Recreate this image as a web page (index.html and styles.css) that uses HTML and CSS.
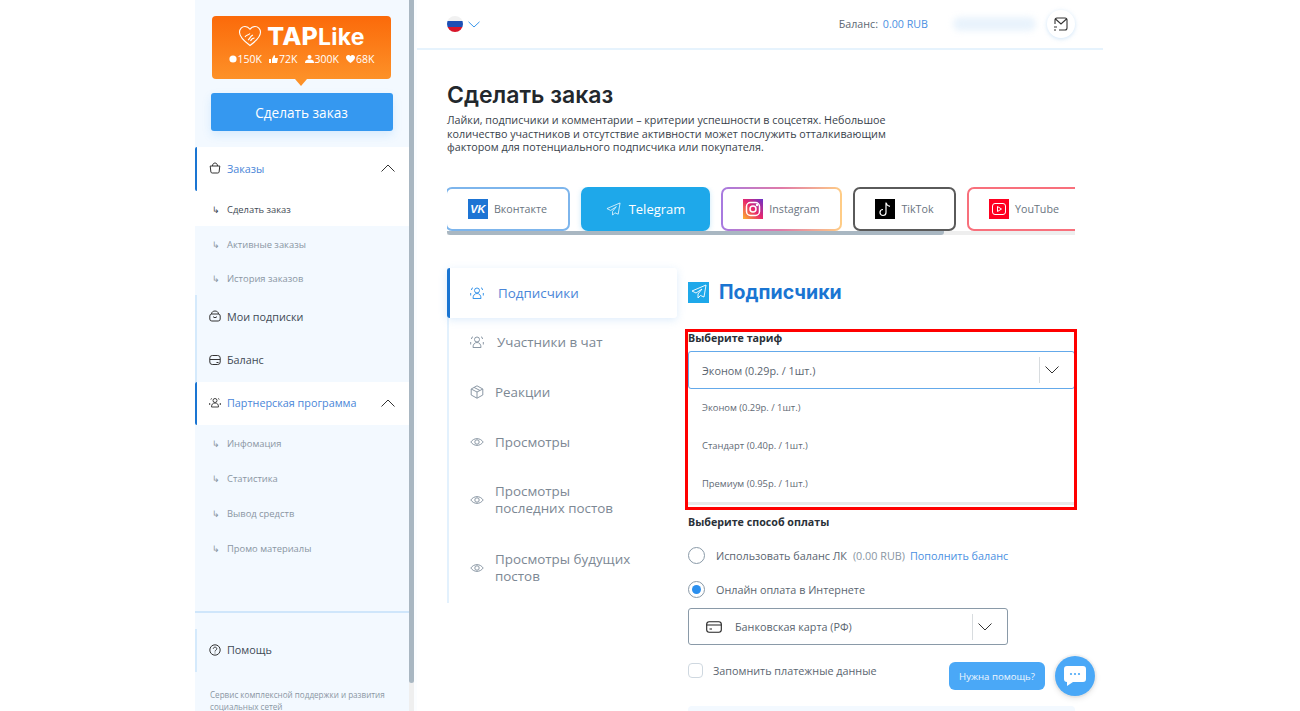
FILE: index.html
```html
<!DOCTYPE html>
<html lang="ru">
<head>
<meta charset="utf-8">
<title>Сделать заказ</title>
<link rel="stylesheet" href="styles.css">
</head>
<body>
<div class="app">
  <aside class="sidebar">
    <div class="sidebar-body">
      <div class="logo-card">
        <div class="logo-row">
          <svg class="logo-heart" viewBox="0 0 24 22" width="24" height="22" fill="none" stroke="#fff" stroke-width="1.1"><path d="M12 20.5C6 16 1.5 12 1.5 7.2 1.5 3.8 4 1.5 7 1.5c2 0 3.8 1 5 2.8 1.2-1.8 3-2.8 5-2.8 3 0 5.500 2.300 5.500 5.700C22.500 12 18 16 12 20.500z"/><path d="M7 12c2-3 3-1 5-3.500M10 15c2-1 2-4 5-5M12.500 16c1-2 2-3 4-3"/></svg>
          <span class="logo-name">TAP<span class="logo-light">Like</span></span>
        </div>
        <div class="logo-stats">
          <span class="stat"><svg viewBox="0 0 8 8" width="8" height="8"><circle cx="4" cy="4" r="3.600" fill="#fff"/></svg>150K</span>
          <span class="stat"><svg viewBox="0 0 9 8" width="9" height="8"><path d="M0 4h2v4H0zM3 4l2-4c1 0 1.200 1 1 2l-.2 1H9L8 8H3z" fill="#fff"/></svg>72K</span>
          <span class="stat"><svg viewBox="0 0 9 8" width="9" height="8"><circle cx="4.500" cy="2" r="2" fill="#fff"/><path d="M0 8c0-3 2-3.500 4.500-3.500S9 5 9 8z" fill="#fff"/></svg>300K</span>
          <span class="stat"><svg viewBox="0 0 9 8" width="9" height="8"><path d="M4.500 8C2 6 0 4.500 0 2.400 0 1 1 0 2.300 0c1 0 1.700.5 2.200 1.300C5 .5 5.700 0 6.700 0 8 0 9 1 9 2.400 9 4.500 7 6 4.500 8z" fill="#fff"/></svg>68K</span>
        </div>
      </div>
      <button class="order-btn">Сделать заказ</button>

      <nav class="menu">
        <div class="menu-item is-open">
          <svg class="mi-icon" viewBox="0 0 12 12" fill="none" stroke="#333" stroke-width="1"><path d="M1.200 4h9.600l-.7 6a1.300 1.300 0 0 1-1.300 1H3.200a1.300 1.300 0 0 1-1.300-1zM3.500 4c0-4 5-4 5 0"/></svg>
          <span class="mi-label">Заказы</span>
          <svg class="chev-up" viewBox="0 0 14 8" fill="none" stroke="#333" stroke-width="1"><path d="M.5 7.500 7 1l6.500 6.500"/></svg>
        </div>
        <a class="sub-item is-current"><span class="sub-arrow">↳</span>Сделать заказ</a>
        <a class="sub-item"><span class="sub-arrow">↳</span>Активные заказы</a>
        <a class="sub-item last-sub"><span class="sub-arrow">↳</span>История заказов</a>
        <div class="plain-group">
          <div class="menu-item plain">
            <svg class="mi-icon" viewBox="0 0 12 12" fill="none" stroke="#333" stroke-width="1"><rect x=".8" y="4" width="10.400" height="7" rx="2"/><path d="M2.500 4c0-4 7-4 7 0M4 6.500c1 1.500 3 1.500 4 0"/></svg>
            <span class="mi-label">Мои подписки</span>
          </div>
          <div class="menu-item plain">
            <svg class="mi-icon" viewBox="0 0 12 12" fill="none" stroke="#333" stroke-width="1"><rect x=".8" y="1.500" width="10.400" height="9" rx="2.500"/><path d="M.8 5.500h10.400M7.500 8.500h2"/></svg>
            <span class="mi-label">Баланс</span>
          </div>
        </div>
        <div class="menu-item is-open">
          <svg class="mi-icon" viewBox="0 0 12 12" fill="none" stroke="#444" stroke-width="1"><circle cx="6" cy="3.500" r="2"/><path d="M2.500 10c0-3 1.500-4 3.500-4s3.500 1 3.500 4zM1.800 2.500a1.300 1.300 0 0 1 1-1M10.200 2.500a1.300 1.300 0 0 0-1-1M.7 8V6M11.300 8V6"/></svg>
          <span class="mi-label">Партнерская программа</span>
          <svg class="chev-up" viewBox="0 0 14 8" fill="none" stroke="#333" stroke-width="1"><path d="M.5 7.500 7 1l6.500 6.500"/></svg>
        </div>
        <a class="sub-item"><span class="sub-arrow">↳</span>Инфомация</a>
        <a class="sub-item"><span class="sub-arrow">↳</span>Статистика</a>
        <a class="sub-item"><span class="sub-arrow">↳</span>Вывод средств</a>
        <a class="sub-item"><span class="sub-arrow">↳</span>Промо материалы</a>
      </nav>

      <div class="sidebar-foot">
        <div class="menu-item plain help-item">
          <svg class="mi-icon" viewBox="0 0 12 12" fill="none" stroke="#333" stroke-width="1"><circle cx="6" cy="6" r="5.200"/><path d="M4.300 4.800c0-2.200 3.500-2.200 3.500 0 0 1.300-1.800 1.300-1.800 2.700M6 8.600v.8"/></svg>
          <span class="mi-label">Помощь</span>
        </div>
        <p class="foot-text">Сервис комплексной поддержки и развития социальных сетей</p>
      </div>
    </div>
    <div class="side-scroll"><div class="side-thumb"></div></div>
  </aside>

  <div class="main">
    <header class="topbar">
      <div class="lang">
        <span class="flag"><i class="f-w"></i><i class="f-b"></i><i class="f-r"></i></span>
        <svg class="lang-chev" viewBox="0 0 12 7" fill="none" stroke="#3a96ea" stroke-width="1"><path d="M.5.800 6 6l5.500-5.200"/></svg>
      </div>
      <div class="top-right">
        <span class="bal">Баланс: <b>0.00 RUB</b></span>
        <span class="user-blur"></span>
        <span class="mail">
          <svg viewBox="0 0 16 14" width="16" height="14" fill="none" stroke="#333" stroke-width="1.100"><path d="M2 7V3a2 2 0 0 1 2-2h8a2 2 0 0 1 2 2v8a2 2 0 0 1-2 2H6M2.500 2l5.500 5 5.500-5M1 10h3M1 13h2"/></svg>
        </span>
      </div>
    </header>

    <div class="content">
      <h1 class="page-title">Сделать заказ</h1>
      <p class="page-desc">Лайки, подписчики и комментарии – критерии успешности в соцсетях. Небольшое количество участников и отсутствие активности может послужить отталкивающим фактором для потенциального подписчика или покупателя.</p>

      <div class="net-scroller">
        <div class="net-tabs">
          <a class="net net-vk"><span class="net-ico vk">VK</span>Вконтакте</a>
          <a class="net net-tg"><svg viewBox="0 0 16 16" width="15" height="15" fill="none" stroke="#fff" stroke-opacity=".8" stroke-width="1"><path d="M15 1 1 7l4 2 6-4-4 5v4l2.500-2.500L13 13z"/></svg>Telegram</a>
          <a class="net net-ig"><span class="net-ico ig"><svg viewBox="0 0 20 20" width="20" height="20" fill="none" stroke="#fff" stroke-width="1.500"><rect x="3.500" y="3.500" width="13" height="13" rx="4"/><circle cx="10" cy="10" r="3"/><circle cx="14" cy="6" r=".5"/></svg></span>Instagram</a>
          <a class="net net-tt"><span class="net-ico tt"><svg viewBox="0 0 20 20" width="20" height="20" fill="none" stroke="#fff" stroke-width="1.200"><path d="M11 3.500v10a3 3 0 1 1-3-3M11 3.500c.5 2.500 2 3.500 4 3.800"/></svg></span>TikTok</a>
          <a class="net net-yt"><span class="net-ico yt"><svg viewBox="0 0 20 20" width="20" height="20" fill="none" stroke="#fff" stroke-width="1"><rect x="3.500" y="4.500" width="13" height="11" rx="2.500"/><path d="M8.500 7.500v5l4-2.500z"/></svg></span>YouTube</a>
        </div>
      </div>
      <div class="net-bar"><div class="net-thumb"></div></div>

      <div class="order-grid">
        <div class="service-list">
          <a class="service is-active"><svg class="svc-ico" viewBox="0 0 14 14" fill="none" stroke="#3a96ea" stroke-width="1"><circle cx="7" cy="4.500" r="2.500"/><path d="M3 12.500c0-3.500 1.800-5 4-5s4 1.500 4 5zM1.500 4A2 2 0 0 1 3 1.800M12.500 4A2 2 0 0 0 11 1.800M.7 9.500V7M13.300 9.500V7"/></svg><span class="svc-wide">Подписчики</span></a>
          <a class="service"><svg class="svc-ico" viewBox="0 0 14 14" fill="none" stroke="#8b98a5" stroke-width="1"><circle cx="7" cy="4.500" r="2.500"/><path d="M3 12.500c0-3.500 1.800-5 4-5s4 1.500 4 5zM1.500 4A2 2 0 0 1 3 1.800M12.500 4A2 2 0 0 0 11 1.800M.7 9.500V7M13.300 9.500V7"/></svg><span class="svc-wide">Участники в чат</span></a>
          <a class="service"><svg class="svc-ico" viewBox="0 0 14 14" fill="none" stroke="#8b98a5" stroke-width="1"><path d="M7 .8 12.800 4v6L7 13.200 1.200 10V4zM1.200 4 7 7l5.800-3M7 7v6.200M4 2.400 10 5.500"/></svg><span>Реакции</span></a>
          <a class="service"><svg class="svc-ico" viewBox="0 0 14 14" fill="none" stroke="#8b98a5" stroke-width="1"><path d="M.8 7C4 2.500 10 2.500 13.200 7 10 11.500 4 11.500.8 7z"/><circle cx="7" cy="7" r="2.200"/></svg><span>Просмотры</span></a>
          <a class="service tall"><svg class="svc-ico" viewBox="0 0 14 14" fill="none" stroke="#8b98a5" stroke-width="1"><path d="M.8 7C4 2.500 10 2.500 13.200 7 10 11.500 4 11.500.8 7z"/><circle cx="7" cy="7" r="2.200"/></svg><span>Просмотры<br>последних постов</span></a>
          <a class="service tall last"><svg class="svc-ico" viewBox="0 0 14 14" fill="none" stroke="#8b98a5" stroke-width="1"><path d="M.8 7C4 2.500 10 2.500 13.200 7 10 11.500 4 11.500.8 7z"/><circle cx="7" cy="7" r="2.200"/></svg><span>Просмотры будущих<br>постов</span></a>
        </div>

        <section class="form">
          <div class="form-head">
            <span class="tg-square"><svg viewBox="0 0 16 16" width="16" height="16" fill="none" stroke="#fff" stroke-opacity=".9" stroke-width="1"><path d="M15 1 1 7l4 2 6-4-4 5v4l2.500-2.500L13 13z"/></svg></span>
            <h2 class="form-title">Подписчики</h2>
          </div>

          <div class="tariff">
            <div class="field-label">Выберите тариф</div>
            <div class="select is-open">
              <span class="select-value">Эконом (0.29р. / 1шт.)</span>
              <span class="select-sep"></span>
              <svg class="select-chev" viewBox="0 0 14 8" fill="none" stroke="#333" stroke-width="1"><path d="M.5.500 7 7l6.500-6.500"/></svg>
            </div>
            <ul class="options">
              <li>Эконом (0.29р. / 1шт.)</li>
              <li>Стандарт (0.40р. / 1шт.)</li>
              <li>Премиум (0.95р. / 1шт.)</li>
            </ul>
            <div class="options-bar"></div>
            <div class="highlight"></div>
          </div>

          <div class="field-label pay-label">Выберите способ оплаты</div>
          <label class="radio-row"><span class="radio"></span><span class="radio-text">Использовать баланс ЛК</span><span class="muted">(0.00 RUB)</span><a class="link">Пополнить баланс</a></label>
          <label class="radio-row second"><span class="radio is-on"></span><span class="radio-text">Онлайн оплата в Интернете</span></label>
          <div class="select pay-select">
            <svg class="card-ico" viewBox="0 0 16 12" width="16" height="12" fill="none" stroke="#222" stroke-width="1.100"><rect x=".7" y=".7" width="14.600" height="10.600" rx="2.500"/><path d="M.7 4h14.600M3.500 8H6"/></svg>
            <span class="select-value">Банковская карта (РФ)</span>
            <span class="select-sep"></span>
            <svg class="select-chev" viewBox="0 0 14 8" fill="none" stroke="#333" stroke-width="1"><path d="M.5.500 7 7l6.500-6.500"/></svg>
          </div>
          <label class="check-row"><span class="check"></span>Запомнить платежные данные</label>
          <div class="summary"></div>
        </section>
      </div>
    </div>

    <div class="chat-widget">
      <span class="chat-label">Нужна помощь?</span>
      <span class="chat-btn"><svg viewBox="0 0 22 20" width="22" height="20"><path d="M3 0h16a3 3 0 0 1 3 3v10a3 3 0 0 1-3 3H9l-6 4v-4a3 3 0 0 1-3-3V3a3 3 0 0 1 3-3z" fill="#fff"/><circle cx="7" cy="8" r="1.100" fill="#4aa8f7"/><circle cx="11" cy="8" r="1.100" fill="#4aa8f7"/><circle cx="15" cy="8" r="1.100" fill="#4aa8f7"/></svg></span>
    </div>
  </div>
</div>
</body>
</html>
```
FILE: styles.css
```css
* { box-sizing: border-box; }
html, body { margin: 0; height: 100%; overflow: hidden; background: #fff; }
body { font-family: "Open Sans", "Noto Sans", sans-serif; color: #4a5560; }
a { color: inherit; text-decoration: none; }

.app { display: flex; width: 908px; height: 711px; margin-left: 195px; overflow: hidden; }

/* Sidebar */
.sidebar { display: flex; flex: none; width: 222px; height: 711px; background: #fbfdff; }
.sidebar-body { display: flex; flex-direction: column; width: 214px; background: #f3f9ff; padding-top: 16px; overflow: hidden; }
.sidebar-body > * { flex: none; }
.side-scroll { width: 5px; margin-right: 3px; background: #efefef; }
.side-thumb { height: 683px; background: #a9b7c2; border-radius: 0 0 3px 3px; }

.logo-card { position: relative; width: 179px; height: 63px; margin-left: 17px; border-radius: 4px; background: linear-gradient(#fb6a0a, #fd9128); color: #fff; padding-top: 8px; }
.logo-card::after { content: ""; position: absolute; left: 83px; top: 63px; border: 6px solid transparent; border-top: 7px solid #fd9128; border-bottom: 0; }
.logo-row { display: flex; align-items: center; justify-content: center; gap: 5px; height: 24px; }
.logo-name { font-family: "Inter", sans-serif; font-weight: 800; font-size: 25px; letter-spacing: .2px; }
.logo-light { font-weight: 700; font-size: 23px; }
.logo-stats { display: flex; justify-content: center; gap: 7px; margin-top: 4px; font-size: 10.500px; line-height: 14px; }
.stat { display: inline-flex; align-items: center; gap: 1px; }

.order-btn { display: block; width: 182px; height: 38px; margin: 14px 0 0 15.500px; border: 0; border-radius: 3px; background: #3598f0; color: #fff; font: 13.600px "Open Sans", sans-serif; box-shadow: 0 4px 10px rgba(53, 152, 240, .15); }

.menu { margin-top: 16px; }
.menu-item { display: flex; align-items: center; height: 43px; padding: 0 0 2px 14px; font-size: 10.800px; color: #3f4a55; }
.menu-item.is-open { background: #fff; color: #4a86d8; border-left: 2px solid #1a75d2; padding-left: 12px; border-radius: 2px 0 0 2px; }
.menu > .menu-item:first-child { height: 44px; }
.mi-icon { flex: none; width: 12px; height: 12px; margin-right: 6px; }
.chev-up { width: 14px; height: 8px; margin-left: auto; margin-right: 14px; }
.sub-item { display: flex; align-items: center; height: 35px; padding: 1px 0 0 17px; font-size: 9.400px; color: #8a96a3; }
.sub-item.is-current { background: #fff; color: #3f4a55; }
.sub-item.last-sub { height: 34px; }
.sub-arrow { width: 15px; font-size: 9px; }
.plain-group { border-left: 2px solid #d5eafc; }
.plain-group .menu-item { padding-left: 12px; }
.plain-group .menu-item:first-child { height: 44px; }

.sidebar-foot { margin-top: 46px; border-top: 2px solid #cfe6fb; padding-top: 16px; }
.help-item { border-left: 2px solid #d5eafc; padding-left: 12px; }
.foot-text { margin: 17px 10px 0 15px; font-size: 8.100px; line-height: 12px; color: #8a96a3; }

/* Main */
.main { position: relative; flex: 1; min-width: 0; }
.topbar { display: flex; align-items: center; justify-content: space-between; height: 50px; padding: 0 28px 0 30px; border-bottom: 2px solid #e6f3fd; }
.lang { display: flex; align-items: center; gap: 5px; }
.flag { display: flex; flex-direction: column; width: 16px; height: 16px; border-radius: 50%; overflow: hidden; }
.flag i { flex: 1; display: block; }
.f-w { background: #f1f1f1; }
.f-b { background: #1d4fb5; }
.f-r { background: #d8152a; }
.lang-chev { width: 12px; height: 7px; }
.top-right { display: flex; align-items: center; }
.bal { font-size: 10.700px; color: #5d6873; }
.bal b { font-weight: 400; color: #4a90e2; margin-left: 2px; }
.user-blur { width: 83px; height: 14px; margin: 0 11px 0 25px; border-radius: 8px; background: #e9f3fc; filter: blur(3px); }
.mail { display: flex; align-items: center; justify-content: center; width: 28px; height: 28px; border-radius: 50%; background: #fff; box-shadow: 0 1px 4px rgba(120, 180, 235, .35); }

.content { padding: 33px 28px 0 30px; }
.page-title { margin: 0; font-family: "Inter", sans-serif; font-weight: 600; font-size: 23px; line-height: 24px; color: #22272c; }
.page-desc { width: 450px; margin: 7px 0 0; font-size: 10.750px; line-height: 13.500px; color: #39424b; }

.net-scroller { margin-top: 32.500px; overflow: hidden; }
.net-tabs { display: flex; height: 44px; gap: 11px; }
.net { display: flex; flex: none; align-items: center; justify-content: center; height: 44px; border-radius: 7px; border: 2px solid; font-size: 10.700px; color: #6a7480; background: #fff; }
.net-vk { width: 125px; margin-left: -2px; border-color: #7db5ec; }
.net-tg { width: 129px; gap: 8px; border: 0; background: #1ea8ea; color: #fff; font-size: 13px; box-shadow: 0 1px 5px rgba(30, 168, 234, .25); }
.net-ig { width: 121px; border-color: transparent; background: linear-gradient(#fff, #fff) padding-box, linear-gradient(90deg, #a77ae0, #e07aa8 50%, #ffcd85) border-box; }
.net-tt { width: 103px; border-color: #5a5a5a; }
.net-yt { width: 114px; border-color: #f8707c; }
.net-ico { display: flex; flex: none; align-items: center; justify-content: center; width: 20px; height: 20px; margin-right: 6px; }
.vk { background: #1d74d4; color: #fff; font: italic 700 11px "Liberation Sans", sans-serif; }
.ig { background: linear-gradient(45deg, #fdb62c, #e8276d 50%, #6a33c9); }
.tt { background: #000; }
.yt { background: #ff0020; }
.net-bar { height: 4px; background: #eee; }
.net-thumb { width: 497px; height: 4px; background: #a9b7c2; border-radius: 0 0 3px 3px; }

.order-grid { display: flex; margin-top: 33px; }
.service-list { flex: none; width: 230px; height: 335px; border-left: 2px solid #e3f1fd; }
.service { display: flex; align-items: center; height: 50px; padding: 0 0 2px 21px; font-size: 13.400px; line-height: 17px; color: #7c8894; }
.service.is-active { margin-left: -2px; padding: 0 0 0 20px; border-left: 3px solid #1a75d2; border-radius: 3px; background: #fff; color: #4a86d8; box-shadow: 0 2px 8px rgba(100, 170, 235, .22); }
.service.tall { height: 66px; }
.service.last { height: 70px; }
.svc-ico { flex: none; width: 14px; height: 14px; margin-right: 11px; }
.svc-wide { margin-left: 2px; }
.is-active .svc-wide { margin-left: 3px; }

.form { flex: none; width: 387px; margin-left: 11px; }
.form-head { display: flex; align-items: center; height: 50px; padding-bottom: 2px; }
.tg-square { display: flex; align-items: center; justify-content: center; width: 21px; height: 21px; background: #1ea8ea; }
.form-title { margin: 0 0 0 10px; font-family: "Inter", sans-serif; font-weight: 700; font-size: 19.500px; color: #1a75d2; }

.tariff { position: relative; margin-top: 13px; }
.highlight { position: absolute; left: -3px; right: -2px; top: -2px; height: 181px; border: 3px solid #f00; pointer-events: none; }
.field-label { font-size: 10.700px; line-height: 14px; font-weight: 700; color: #2a3138; }
.select { display: flex; align-items: center; height: 38px; margin-top: 6px; border: 1px solid #64a9ea; border-radius: 3px; font-size: 10.800px; color: #5a6570; padding-left: 13px; }
.select-value { flex: 1; }
.select-sep { width: 1px; height: 26px; background: #d8dcdf; }
.select-chev { width: 14px; height: 8px; margin: 0 15px 0 5px; }
.options { list-style: none; margin: -1px 0 0; padding: 0; }
.options li { display: flex; align-items: center; height: 38px; padding-left: 14px; font-size: 9.400px; color: #5f6a75; }
.options-bar { height: 3px; background: #e9e9e9; }

.pay-label { margin-top: 10px; }
.radio-row { display: flex; align-items: center; height: 18px; margin-top: 17px; font-size: 10.800px; color: #5a6570; }
.radio-row.second { margin-top: 16px; }
.radio { flex: none; position: relative; width: 17px; height: 17px; margin-right: 11px; border: 1px solid #8a9aa8; border-radius: 50%; background: #fff; }
.radio.is-on::after { content: ""; position: absolute; inset: 3px; border-radius: 50%; background: #2b8fee; }
.muted { margin-left: 6px; color: #8a96a3; }
.link { margin-left: 5px; color: #4a90e2; }
.pay-select { width: 320px; height: 37px; margin-top: 10px; border-color: #8a9aa8; padding-left: 17px; }
.card-ico { margin-right: 13px; }
.check-row { display: flex; align-items: center; height: 16px; margin-top: 17px; font-size: 10.800px; color: #5a6570; }
.check { flex: none; width: 15px; height: 15px; margin-right: 10px; border: 1px solid #cfd8e0; border-radius: 4px; }
.summary { height: 40px; margin-top: 28px; background: #f3f9ff; border-radius: 4px; }

.chat-widget { position: absolute; left: 532px; top: 656px; display: flex; align-items: center; gap: 10px; }
.chat-label { display: flex; align-items: center; justify-content: center; width: 96px; height: 28px; border-radius: 6px; background: #4aa8f7; color: #eef6fd; font-size: 9.600px; }
.chat-btn { display: flex; align-items: center; justify-content: center; width: 40px; height: 40px; border-radius: 50%; background: #4aa8f7; box-shadow: 0 0 0 2px rgba(0, 0, 0, .03), 0 2px 6px rgba(0, 0, 0, .12); }
```
